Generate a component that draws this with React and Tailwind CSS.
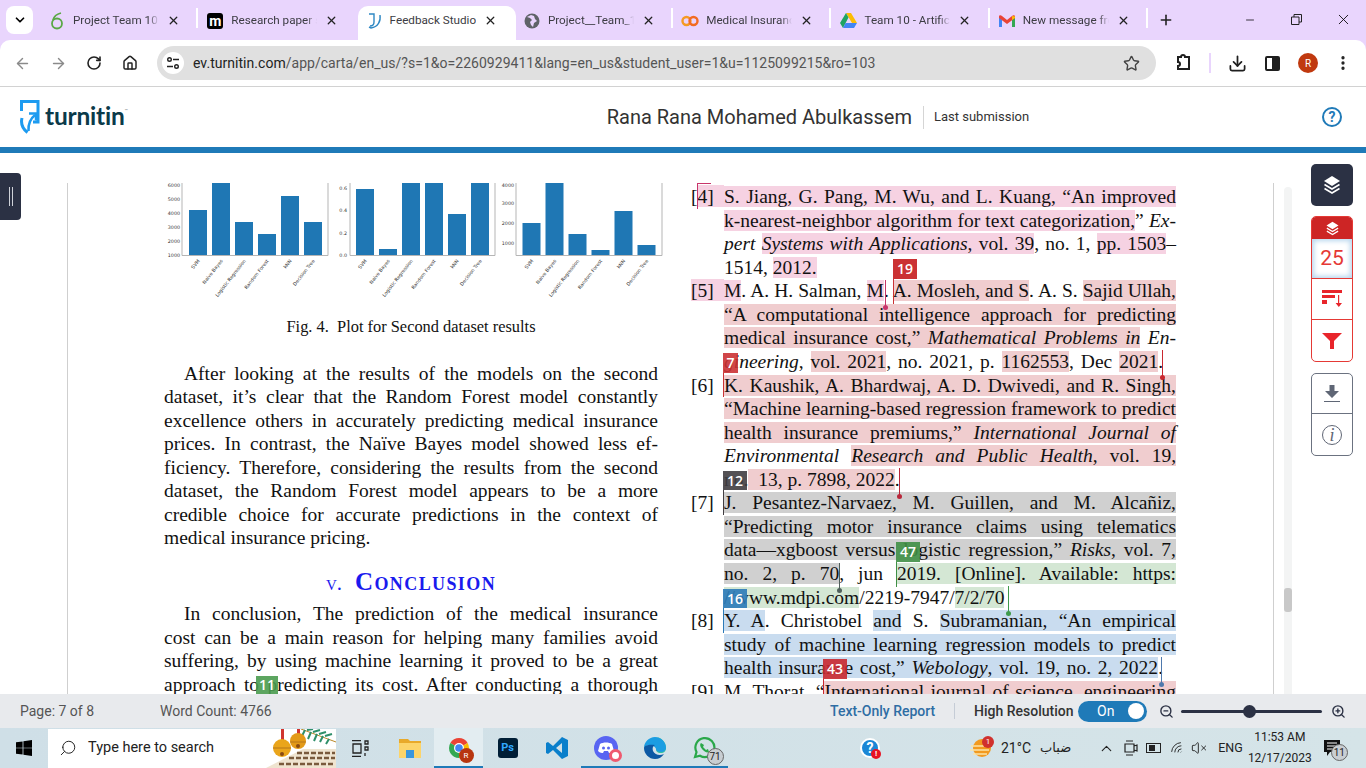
import {
  ArrowLeft, ArrowRight, RotateCw, Home, Star, Download, MoreVertical, X, Plus, Minus,
  ChevronDown, ChevronUp, Search, ZoomIn, ZoomOut, Wifi, VolumeX,
} from "lucide-react";

const SERIF = "[font-family:'Liberation_Serif',serif]";

const PINK = "bg-[#f6d2e2]";
const ROSE = "bg-[#f0cdcf]";
const GRAY = "bg-[#d0d0d0]";
const GREEN = "bg-[#d4e7d4]";
const BLUE = "bg-[#c9dcef]";

function OverleafIcon() {
  return (
    <svg width="14" height="18" viewBox="0 0 14 18" fill="none" stroke="#5aa845" strokeWidth="1.8">
      <circle cx="7" cy="11.5" r="5" />
      <path d="M11 1c-4 1-7 3-8 7" />
    </svg>
  );
}

function TurnitinFavicon() {
  return (
    <svg width="18" height="18" viewBox="0 0 18 18" fill="none" stroke="#2f88c4" strokeWidth="1.4">
      <path d="M4 2h5v8c0 3-2 4-4 4" />
      <path d="M15 3c1 6-2 12-9 13l-2-1" />
    </svg>
  );
}

function GlobeIcon() {
  return (
    <svg width="16" height="16" viewBox="0 0 16 16">
      <circle cx="8" cy="8" r="7.5" fill="#5f6368" />
      <path d="M3 4l3 1 2 2-2 2 1 3 2 2 1-4 3-2-2-2-1-3-3-1z" fill="#e9d5fd" />
    </svg>
  );
}

function RingsIcon() {
  return (
    <svg width="18" height="12" viewBox="0 0 18 12" fill="none" strokeWidth="2.4">
      <circle cx="5.5" cy="6" r="4" stroke="#f59a23" />
      <circle cx="12.5" cy="6" r="4" stroke="#f26b21" />
    </svg>
  );
}

function DriveIcon() {
  return (
    <svg width="17" height="15" viewBox="0 0 17 15">
      <path d="M6 0h5l6 10h-5z" fill="#fbbc04" />
      <path d="M6 0l2.5 4.5L3 15 0 10z" fill="#1fa463" />
      <path d="M5.5 10H17l-3 5H3z" fill="#4285f4" />
    </svg>
  );
}

function GmailIcon() {
  return (
    <svg width="16" height="12" viewBox="0 0 16 12">
      <path d="M0 1.5V12h3V5z" fill="#4285f4" />
      <path d="M16 1.5V12h-3V5z" fill="#34a853" />
      <path d="M0 1.5C0 0 2 0 3 1l5 4 5-4c1-1 3-1 3 .5V3L8 9 0 3z" fill="#ea4335" />
      <path d="M13 1l3 .5V3l-3 2z" fill="#fbbc04" />
    </svg>
  );
}

function Tab({ icon, title, active, sep }) {
  return (
    <div className="relative flex h-[34px] w-[158.3px] shrink-0 items-center self-end pb-[5px]">
      {active && (
        <div className="absolute inset-x-0 top-0 bottom-0 rounded-t-[10px] bg-white" />
      )}
      <div className="relative flex w-[30px] shrink-0 items-center justify-center pl-[2px]">{icon}</div>
      <div
        className={`relative w-[88px] overflow-hidden pl-[2px] text-[11.7px] whitespace-nowrap text-[#3c3c43] ${
          active ? "" : "[mask-image:linear-gradient(to_right,black_88%,transparent)]"
        }`}
      >
        {title}
      </div>
      <X className="relative ml-[8px] text-[#222]" size={13} strokeWidth={2.4} />
      {sep && <div className="absolute right-[1px] h-[20px] w-[2px] -translate-y-[3px] bg-white" />}
    </div>
  );
}

function TabBar() {
  return (
    <div className="flex h-[40px] shrink-0 bg-[#e9d5fd]">
      <div className="ml-[6px] mt-[6px] flex h-[28px] w-[27px] shrink-0 items-center justify-center rounded-[8px] bg-white">
        <ChevronDown size={14} strokeWidth={3} />
      </div>
      <div className="ml-[8px] flex">
        <Tab icon={<OverleafIcon />} title="Project Team 10" sep />
        <Tab
          icon={
            <div className="flex size-[16px] items-center justify-center rounded-[3px] bg-black text-[14px] leading-none font-bold text-white">
              m
            </div>
          }
          title="Research paper s"
        />
        <Tab icon={<TurnitinFavicon />} title="Feedback Studio" active />
        <Tab icon={<GlobeIcon />} title="Project__Team_10" sep />
        <Tab icon={<RingsIcon />} title="Medical Insurance" sep />
        <Tab icon={<DriveIcon />} title="Team 10 - Artificial" sep />
        <Tab icon={<GmailIcon />} title="New message from" sep />
      </div>
      <Plus className="ml-[9px] mt-[12px] text-[#222]" size={16} strokeWidth={2.4} />
      <div className="ml-auto flex pb-[1px]">
        <div className="flex w-[47px] items-center justify-center">
          <Minus size={12} strokeWidth={1.5} />
        </div>
        <div className="flex w-[47px] items-center justify-center">
          <svg width="11" height="11" viewBox="0 0 11 11" fill="none" stroke="#222">
            <path d="M.5 3h7.5v7.5H.5zM3 3V.5h7.5V8H8" />
          </svg>
        </div>
        <div className="flex w-[46px] items-center justify-center">
          <X size={17} strokeWidth={1.2} />
        </div>
      </div>
    </div>
  );
}

function PuzzleIcon() {
  return (
    <svg width="20" height="20" viewBox="0 0 20 20" fill="none" stroke="#1f1f1f" strokeWidth="2">
      <path d="M5 4h3a2 2 0 0 1 4 0h4v12H5v-3a2 2 0 0 0 0-4z" />
    </svg>
  );
}

function Toolbar() {
  return (
    <div className="h-[47px] shrink-0 bg-[#e9d5fd]">
      <div className="flex h-[47px] items-center rounded-t-[10px] border-b border-[#d2d2d2] bg-white">
        <ArrowLeft className="ml-[14px] text-[#8a8a8a]" size={17} />
        <ArrowRight className="ml-[19px] text-[#8a8a8a]" size={17} />
        <RotateCw className="ml-[19px] text-[#222]" size={16} strokeWidth={2.4} />
        <Home className="ml-[20px] text-[#222]" size={16} strokeWidth={2.2} />
        <div className="ml-[19px] flex h-[34px] w-[999px] items-center rounded-full bg-[#e0e0e0]">
          <div className="ml-[5px] flex size-[22px] items-center justify-center rounded-full bg-white">
            <svg width="14" height="14" viewBox="0 0 14 14" fill="none" stroke="#222" strokeWidth="1.4">
              <circle cx="3.5" cy="3.5" r="1.8" />
              <path d="M7 3.5h6M1 10.5h6" />
              <circle cx="10.5" cy="10.5" r="1.8" />
            </svg>
          </div>
          <div className="ml-[9px] pt-[1px] text-[14px] tracking-[0.03px] whitespace-nowrap text-[#555]">
            <span className="text-[#222]">ev.turnitin.com</span>
            /app/carta/en_us/?s=1&amp;o=2260929411&amp;lang=en_us&amp;student_user=1&amp;u=1125099215&amp;ro=103
          </div>
          <Star className="ml-auto mr-[16px] text-[#444]" size={17} strokeWidth={2} />
        </div>
        <div className="ml-[17px]">
          <PuzzleIcon />
        </div>
        <div className="ml-[16px] h-[20px] w-[2px] bg-[#e9d5fd]" />
        <Download className="ml-[17px] text-[#1f1f1f]" size={19} strokeWidth={2.2} />
        <div className="ml-[18px] flex h-[15px] w-[15px] rounded-[2px] border-2 border-[#1f1f1f]">
          <div className="ml-auto h-full w-[6px] bg-[#1f1f1f]" />
        </div>
        <div className="ml-[18px] flex size-[20px] items-center justify-center rounded-full bg-[#c0390f] text-[10px] text-white">
          R
        </div>
        <MoreVertical className="ml-[16px] text-[#222]" size={18} strokeWidth={2.4} />
      </div>
    </div>
  );
}

function AppHeader() {
  return (
    <header className="flex h-[66px] shrink-0 border-b-[6px] border-[#1f7ab8] bg-white text-[#333]">
      <div className="ml-[20px] flex items-center">
        <svg width="22" height="34" viewBox="0 0 22 34" fill="none" stroke="#1d9bf0" strokeWidth="3">
          <path d="M1.500 11V1.500H18V22H13" />
          <path d="M8.500 31C8 24 10 19 15 15" strokeWidth="2.500" />
          <path d="M9 13.500h7v7" strokeWidth="2.500" />
          <path d="M2 18c-1.500 6 1 11 5.500 14.500" />
        </svg>
        <div className="relative ml-[3px] mb-[1px] text-[24.5px] leading-none font-bold tracking-[-0.2px] text-[#0b3a4a] [font-family:Lato,sans-serif]">
          turnitin
          <span className="absolute -right-[3px] top-[5px] text-[4px] font-normal text-[#777]">™</span>
        </div>
      </div>
      <div className="ml-[482px] flex items-center">
        <div className="text-[20px] whitespace-nowrap">Rana Rana Mohamed Abulkassem</div>
        <div className="ml-[11px] h-[23px] w-px bg-[#d5d5d5]" />
        <div className="ml-[10px] text-[13px]">Last submission</div>
      </div>
      <div className="ml-auto mr-[24px] flex items-center">
        <div className="flex size-[20px] items-center justify-center rounded-full border-2 border-[#1f7ab8] text-[14px] font-bold text-[#1f7ab8]">
          ?
        </div>
      </div>
    </header>
  );
}

function Chart({ x, w, axisL, axisR, bars, ticks, tickX }) {
  const labels = ["SVM", "Naive Bayes", "Logistic Regression", "Random Forest", "kNN", "Decision Tree"];
  return (
    <svg width={w} height="132" viewBox={`${x} 183 ${w} 132`} className="shrink-0">
      {bars.map(([bx, bw, top], i) => (
        <g key={i}>
          <rect x={bx} y={top} width={bw} height={255.5 - top} fill="#1f77b4" />
          <text
            x={bx + bw / 2 + 2}
            y="261"
            fontSize="4.8"
            fill="#333"
            textAnchor="end"
            transform={`rotate(-52 ${bx + bw / 2 + 2} 261)`}
            fontFamily="'DejaVu Sans', sans-serif"
          >
            {labels[i]}
          </text>
        </g>
      ))}
      <path d={`M${axisL} 183V255.5H${axisR}V183`} fill="none" stroke="#b5b5b5" />
      {ticks.map(([label, y]) => (
        <text key={label} x={tickX} y={y + 1.7} fontSize="4.8" fill="#333" textAnchor="end" fontFamily="'DejaVu Sans', sans-serif">
          {label}
        </text>
      ))}
    </svg>
  );
}

function Charts() {
  return (
    <div className="flex h-[132px]">
      <Chart
        x={164}
        w={169}
        axisL={182}
        axisR={328}
        tickX={180}
        bars={[[189, 18, 210], [212, 18, 183], [235, 18, 222], [258, 18, 234], [281, 18, 196], [304, 18, 222]]}
        ticks={[["6000", 185], ["5000", 199.5], ["4000", 213.5], ["3000", 227.5], ["2000", 241.5], ["1000", 255]]}
      />
      <Chart
        x={333}
        w={165}
        axisL={350}
        axisR={495}
        tickX={347}
        bars={[[356, 18, 189], [379, 18, 249], [402, 18, 183], [425, 18, 183], [448, 18, 214], [471, 18, 183]]}
        ticks={[["0.6", 188], ["0.4", 210], ["0.2", 233], ["0.0", 255]]}
      />
      <Chart
        x={498}
        w={166}
        axisL={516}
        axisR={662}
        tickX={514}
        bars={[[522.5, 18, 223], [545.5, 18, 183], [568.5, 18, 234], [591.5, 18, 250], [614.5, 18, 211], [637.5, 18, 245]]}
        ticks={[["4000", 185], ["3000", 203], ["2000", 223], ["1000", 243]]}
      />
    </div>
  );
}

// one typeset line of the pdf, stretched to the column like LaTeX did it
function L({ children, end, fit = "" }) {
  return (
    <div className={end ? "whitespace-nowrap" : `text-justify whitespace-nowrap [text-align-last:justify] ${fit}`}>
      {children}
    </div>
  );
}

function LeftColumn() {
  return (
    <div className="w-[494px] shrink-0">
      <Charts />
      <div className="h-[24px] text-center text-[16.4px] leading-[24px]">Fig. 4.&nbsp;&nbsp;Plot for Second dataset results</div>
      <div className="mt-[22.5px]">
        <div className="pl-[20px]">
          <L>After looking at the results of the models on the second</L>
        </div>
        <L>dataset, it’s clear that the Random Forest model constantly</L>
        <L>excellence others in accurately predicting medical insurance</L>
        <L>prices. In contrast, the Naïve Bayes model showed less ef-</L>
        <L>ficiency. Therefore, considering the results from the second</L>
        <L>dataset, the Random Forest model appears to be a more</L>
        <L>credible choice for accurate predictions in the context of</L>
        <L end>medical insurance pricing.</L>
      </div>
      <div className="mt-[20px] flex h-[26px] items-baseline justify-center text-[#1a1aee] [font-variant:small-caps]">
        <span className="mr-[13px] text-[21px]">v.</span>
        <span className="text-[25px] font-bold tracking-[1.4px]">Conclusion</span>
      </div>
      <div className="mt-[6px]">
        <div className="pl-[20px]">
          <L>In conclusion, The prediction of the medical insurance</L>
        </div>
        <L>cost can be a main reason for helping many families avoid</L>
        <L>suffering, by using machine learning it proved to be a great</L>
        <L>approach to predicting its cost. After conducting a thorough</L>
      </div>
    </div>
  );
}

function RefRow({ num, numClass = "", children, end, fit }) {
  return (
    <div className="flex">
      <div className="w-[33px] shrink-0">
        <span className={`block h-[22px] ${numClass}`}>{num}</span>
      </div>
      <div className="w-[452px] shrink-0">
        <L end={end} fit={fit}>{children}</L>
      </div>
    </div>
  );
}

function RightColumn() {
  return (
    <div className="ml-[33px] w-[485px] shrink-0 pt-[2px]">
      <RefRow
        num={
          <span className="flex">
            <span>[</span>
            <span className={`h-[22px] flex-1 ${PINK}`}>4]</span>
          </span>
        }
      >
        <span className={PINK}>S. Jiang, G. Pang, M. Wu, and L. Kuang, “An improved</span>
      </RefRow>
      <RefRow>
        <span className={PINK}>k-nearest-neighbor algorithm for text categorization,</span>” <i>Ex-</i>
      </RefRow>
      <RefRow>
        <i>pert </i>
        <span className={PINK}>
          <i>Systems with Applications</i>, vol. 39
        </span>
        , no. 1, <span className={PINK}>pp. 1503</span>–
      </RefRow>
      <RefRow end>
        1514, <span className={PINK}>2012.</span>
      </RefRow>
      <RefRow num="[5]" numClass={PINK}>
        <span className={PINK}>M</span>. A. H. Salman, <span className={PINK}>M</span>. <span className={ROSE}>A. Mosleh, and S</span>. A. S.{" "}
        <span className={ROSE}>Sajid Ullah,</span>
      </RefRow>
      <RefRow>
        <span className={ROSE}>“A computational intelligence approach for predicting</span>
      </RefRow>
      <RefRow>
        <span className={ROSE}>
          medical insurance cost,” <i>Mathematical Problems in</i>
        </span>{" "}
        <i>En-</i>
      </RefRow>
      <RefRow fit="w-[439px]">
        <i>gineering</i>, <span className={ROSE}>vol. 2021</span>, no. 2021, p. <span className={ROSE}>1162553</span>, Dec{" "}
        <span className={ROSE}>2021</span>.
      </RefRow>
      <RefRow num="[6]">
        <span className={ROSE}>K. Kaushik, A. Bhardwaj, A. D. Dwivedi, and R. Singh,</span>
      </RefRow>
      <RefRow>
        <span className={ROSE}>“Machine learning-based regression framework to predict</span>
      </RefRow>
      <RefRow>
        <span className={ROSE}>
          health insurance premiums,” <i>International Journal of</i>
        </span>
      </RefRow>
      <RefRow>
        <i>Environmental </i>
        <span className={ROSE}>
          <i>Research and Public Health</i>, vol. 19,
        </span>
      </RefRow>
      <RefRow end>
        no.<span className={ROSE}>&nbsp;&nbsp;13, p. 7898, 2022</span>.
      </RefRow>
      <RefRow num="[7]">
        <span className={GRAY}>J. Pesantez-Narvaez, M. Guillen, and M. Alcañiz,</span>
      </RefRow>
      <RefRow>
        <span className={GRAY}>“Predicting motor insurance claims using telematics</span>
      </RefRow>
      <RefRow>
        <span className={GRAY}>
          data—xgboost versus logistic regression,” <i>Risks</i>, vol. 7,
        </span>
      </RefRow>
      <RefRow>
        <span className={GRAY}>no. 2, p. 70</span>, jun <span className={GREEN}>2019. [Online]. Available: https:</span>
      </RefRow>
      <RefRow end>
        <span className={GREEN}>//www.mdpi.com</span>/2219-7947/<span className={GREEN}>7/2/70</span>
      </RefRow>
      <RefRow num="[8]">
        <span className={BLUE}>Y. A</span>. Christobel <span className={BLUE}>and</span> S. <span className={BLUE}>Subramanian, “An empirical</span>
      </RefRow>
      <RefRow>
        <span className={BLUE}>study of machine learning regression models to predict</span>
      </RefRow>
      <RefRow fit="w-[439px]">
        <span className={BLUE}>
          health insurance cost,” <i>Webology</i>, vol. 19, no. 2, 2022
        </span>
        .
      </RefRow>
      <RefRow num="[9]">
        M. Thorat, “<span className={ROSE}>International journal of science, engineering</span>
      </RefRow>
    </div>
  );
}

function Badge({ pos, color, stem, stemH, children }) {
  return (
    <div className={`absolute flex items-center justify-center overflow-visible text-[14px] leading-none font-semibold text-white [font-family:'Open_Sans',sans-serif] ${pos} ${color}`}>
      {children}
      {stem && <div className={`absolute left-0 top-full w-px ${stem} ${stemH}`} />}
    </div>
  );
}

function Pin({ pos, color }) {
  return (
    <div className={`absolute w-px ${pos} ${color}`}>
      <span className={`absolute -bottom-[2px] -left-[2px] size-[5px] rounded-full ${color}`} />
    </div>
  );
}

function Annotations() {
  return (
    <>
      <div className="absolute left-[629px] top-0 h-[26px] w-[14px] border-l border-t border-[#c8356a]" />
      <Pin pos="left-[817px] top-[97px] h-[28px]" color="bg-[#c8356a]" />
      <Pin pos="left-[1094px] top-[167px] h-[28px]" color="bg-[#c9282f]" />
      <Pin pos="left-[831px] top-[285px] h-[29px]" color="bg-[#b9273a]" />
      <Pin pos="left-[771px] top-[380px] h-[28px]" color="bg-[#4f5f5b]" />
      <Pin pos="left-[940px] top-[403px] h-[28px]" color="bg-[#3f9a4b]" />
      <Pin pos="left-[1093px] top-[474px] h-[28px]" color="bg-[#4e79ad]" />
      <Badge pos="left-[825px] top-[76px] h-[20px] w-[24px]" color="bg-[#cb3234]" stem="bg-[#cb3234]" stemH="h-[25px]">19</Badge>
      <Badge pos="left-[655px] top-[170px] h-[20px] w-[15px]" color="bg-[#cb3234]/90" stem="bg-[#cb3234]" stemH="h-[24px]">7</Badge>
      <Badge pos="left-[655px] top-[288px] h-[19px] w-[24px]" color="bg-[#413e42]/90" stem="bg-[#413e42]" stemH="h-[25px]">12</Badge>
      <Badge pos="left-[828px] top-[359px] h-[20px] w-[24px]" color="bg-[#3f8f45]/90" stem="bg-[#3f8f45]" stemH="h-[25px]">47</Badge>
      <Badge pos="left-[655px] top-[406px] h-[19px] w-[24px]" color="bg-[#2b7ab8]/90" stem="bg-[#2b7ab8]" stemH="h-[25px]">16</Badge>
      <Badge pos="left-[755px] top-[476px] h-[20px] w-[24px]" color="bg-[#c9282f]/90" stem="bg-[#c9282f]" stemH="h-[15px]">43</Badge>
      <Badge pos="left-[188px] top-[493px] h-[18px] w-[22px]" color="bg-[#4a9b4f]/90">11</Badge>
    </>
  );
}

function LayersIcon({ size = 20 }) {
  return (
    <svg width={size} height={size} viewBox="0 0 20 20" fill="none" stroke="white" strokeWidth="1.6">
      <path d="M10 1l8 5-8 5-8-5z" fill="white" stroke="none" />
      <path d="M2.5 9.5L10 14l7.5-4.5M2.5 13.5L10 18l7.5-4.5" />
    </svg>
  );
}

function Rail() {
  return (
    <div className="ml-[19px] w-[42px] shrink-0 pt-[11px]">
      <div className="flex h-[42px] items-center justify-center rounded-[5px] bg-[#2b3144]">
        <LayersIcon size={20} />
      </div>
      <div className="mt-[10px] overflow-hidden rounded-[5px] border border-[#e53935] bg-white">
        <div className="flex h-[22px] items-center justify-center bg-[#cd2525]">
          <LayersIcon size={15} />
        </div>
        <div className="flex h-[40px] items-center justify-center border-b border-[#e53935] text-[21px] text-[#e53935] shadow-[inset_0_0_5px_2px_#b9d7ee]">
          25
        </div>
        <div className="flex h-[41px] items-center justify-center border-b border-[#e53935]">
          <svg width="20" height="18" viewBox="0 0 20 18" fill="#e8252b">
            <rect x="0" y="0" width="20" height="3" />
            <rect x="0" y="5" width="13" height="3" />
            <rect x="0" y="10" width="5" height="4" />
            <path d="M16 5h1.2v8H20l-3.2 4-3.2-4H16z" />
          </svg>
        </div>
        <div className="flex h-[41px] items-center justify-center">
          <svg width="20" height="16" viewBox="0 0 20 16" fill="#e8252b">
            <path d="M0 0h20l-8 8v8H8V8z" />
          </svg>
        </div>
      </div>
      <div className="mt-[11px] overflow-hidden rounded-[5px] border border-[#6b7280] bg-white">
        <div className="flex h-[40px] items-center justify-center border-b border-[#6b7280]">
          <svg width="16" height="18" viewBox="0 0 16 18" fill="#5f6675">
            <path d="M5.5 0h5v6H15l-7 7-7-7h4.500z" />
            <rect x="0" y="16" width="16" height="1" />
          </svg>
        </div>
        <div className="flex h-[41px] items-center justify-center">
          <div className={`flex size-[20px] items-center justify-center rounded-full border border-[#5f6675] text-[18px] leading-none text-[#5f6675] italic ${SERIF}`}>
            i
          </div>
        </div>
      </div>
    </div>
  );
}

function Workspace() {
  return (
    <main className="flex min-h-0 flex-1 overflow-hidden bg-white">
      <div className="w-[67px] shrink-0 pt-[20px]">
        <div className="flex h-[47px] w-[21px] items-center justify-center rounded-r-[4px] bg-[#2b3144]">
          <div className="h-[19px] w-[4px] border-x border-[#cfd2d9]" />
        </div>
      </div>
      <div className={`relative mt-[30px] flex h-[511px] w-[1207px] shrink-0 overflow-hidden border-x border-[#cfcfcf] pl-[96px] text-[19.5px] leading-[23.57px] text-[#111] ${SERIF}`}>
        <LeftColumn />
        <RightColumn />
        <Annotations />
      </div>
      <div className="ml-[10px] mt-[34px] w-[8px] shrink-0 rounded-t-[4px] bg-[#f3f4f4]">
        <div className="mt-[401px] h-[24px] rounded-[3px] bg-[#c8c8c8]" />
      </div>
      <Rail />
    </main>
  );
}

function StatusBar() {
  return (
    <footer className="flex h-[34px] shrink-0 items-center bg-[#e8eaed] text-[14px] text-[#555]">
      <div className="ml-[20px] w-[140px]">Page: 7 of 8</div>
      <div className="w-[112px] whitespace-nowrap">Word Count: 4766</div>
      <div className="ml-[558px] w-[106px] font-medium whitespace-nowrap text-[#2e6da4]">Text-Only Report</div>
      <div className="ml-[18px] h-[16px] w-px bg-[#c5ccd6]" />
      <div className="ml-[19px] w-[99px] font-medium whitespace-nowrap text-[#333]">High Resolution</div>
      <div className="ml-[5px] flex h-[21px] w-[69px] items-center justify-between rounded-full bg-[#1f7ab8] pl-[19px] pr-[3px] text-white">
        On
        <span className="size-[16px] rounded-full bg-white" />
      </div>
      <ZoomOut className="ml-[12px] text-[#2b3144]" size={15} strokeWidth={2.2} />
      <div className="relative ml-[7px] h-[3px] w-[141px] rounded bg-[#2b3144]">
        <span className="absolute left-[62px] -top-[5px] size-[13px] rounded-full bg-[#2b3144]" />
      </div>
      <ZoomIn className="ml-[9px] text-[#2b3144]" size={15} strokeWidth={2.2} />
    </footer>
  );
}

function SearchDecor() {
  return (
    <svg width="75" height="39" viewBox="0 0 75 39" className="absolute right-0 top-0">
      <path d="M5 39L42 20H75V39z" fill="#efe4d0" />
      <path d="M18 35h55M28 29h46M36 24h38" stroke="#7a5a3c" strokeWidth="2.5" strokeDasharray="5 2" />
      <path d="M40 0L75 13" stroke="#b8892a" strokeWidth="1" />
      <path d="M44 1l-3 6M50 3l-3 7M56 5l-3 7M62 7l-3 6M68 10l-3 5M46 1l6-1M52 3l7-2M58 5l7-2M64 7l7-2" stroke="#2f8f6a" strokeWidth="2" fill="none" />
      <rect x="20" y="0" width="3" height="11" fill="#d0342f" />
      <rect x="36" y="0" width="3" height="6" fill="#d0342f" />
      <circle cx="21" cy="19" r="9" fill="#eaa51b" />
      <circle cx="37" cy="12" r="8" fill="#e39a18" />
      <path d="M12 19h18M29 13h16" stroke="#b5761a" />
      <circle cx="21" cy="25" r="2" fill="#8a4a12" />
      <circle cx="37" cy="17" r="2" fill="#8a4a12" />
    </svg>
  );
}

function ChromeIcon() {
  return (
    <div className="relative size-[24px]">
      <svg width="24" height="24" viewBox="0 0 24 24">
        <path d="M12 12L3.340 7A10 10 0 0 1 20.660 7Z" fill="#ea4335" />
        <path d="M12 12L20.660 7A10 10 0 0 1 12 22Z" fill="#fbbc04" />
        <path d="M12 12L12 22A10 10 0 0 1 3.340 7Z" fill="#34a853" />
        <circle cx="12" cy="12" r="5" fill="white" />
        <circle cx="12" cy="12" r="3.800" fill="#4285f4" />
      </svg>
      <div className="absolute -right-[3px] -bottom-[3px] flex size-[15px] items-center justify-center rounded-full bg-[#b8360f] text-[8px] text-white">
        R
      </div>
    </div>
  );
}

function CountBubble({ children }) {
  return (
    <span className="absolute -right-[8px] -bottom-[5px] flex size-[17px] items-center justify-center rounded-full border border-[#666] bg-[#c9ced2] text-[10px] text-[#222]">
      {children}
    </span>
  );
}

function Slot({ children, on, lit }) {
  return (
    <div className={`flex h-[40px] w-[49px] shrink-0 items-center justify-center ${lit ? "bg-[#e3edf1]" : ""} ${on ? "border-b-2 border-[#1f7ab8] pt-[2px]" : ""}`}>
      {children}
    </div>
  );
}

function Taskbar() {
  return (
    <div className="flex h-[40px] shrink-0 items-center bg-[linear-gradient(to_right,#cfdfe7,#d5e4e8)] text-[#222]">
      <div className="flex w-[48px] shrink-0 justify-center">
        <svg width="16" height="16" viewBox="0 0 16 16" fill="black">
          <path d="M0 2.300l6.600-.9v6.300H0zM7.400 1.300L16 0v7.700H7.400zM0 8.300h6.600v6.300L0 13.700zM7.400 8.300H16V16l-8.600-1.200z" />
        </svg>
      </div>
      <div className="relative flex h-[39px] w-[288px] shrink-0 items-center bg-white">
        <Search className="ml-[11px] -scale-x-100" size={18} strokeWidth={1.3} />
        <span className="ml-[11px] text-[14.5px]">Type here to search</span>
        <SearchDecor />
      </div>
      <Slot>
        <svg width="17" height="17" viewBox="0 0 17 17" fill="none" stroke="#222" strokeWidth="1.3">
          <path d="M0 .7h9M0 16.300h9M1 4h8v9H1zM13 1v3h3V1zM13 7v3h3V7zM13 13v3" />
        </svg>
      </Slot>
      <Slot>
        <svg width="22" height="20" viewBox="0 0 22 20">
          <path d="M0 1h9l2 2h11v3H0z" fill="#e8a92a" />
          <path d="M0 5h22v15H0z" fill="#fcd46a" />
          <path d="M7 12h8v8H7z" fill="#3a96dd" />
        </svg>
      </Slot>
      <Slot on lit>
        <ChromeIcon />
      </Slot>
      <Slot>
        <div className="flex size-[20px] items-center justify-center rounded-[3px] bg-[#001e36] text-[11px] font-bold text-[#31a8ff]">
          Ps
        </div>
      </Slot>
      <Slot>
        <svg width="24" height="24" viewBox="0 0 24 24">
          <path d="M17 1l6 3v16l-6 3-9-9-5 4-2-1V7l2-1 5 4zM17 7l-6 5 6 5z" fill="#0a7fcb" />
        </svg>
      </Slot>
      <Slot on>
        <div className="relative size-[24px] rounded-full bg-[#5865f2]">
          <svg width="24" height="24" viewBox="0 0 24 24" fill="white">
            <path d="M6 8c3-2 9-2 12 0l2 7c-2 2-4 2-5 2l-1-2h-4l-1 2c-1 0-3 0-5-2z" />
            <circle cx="9.500" cy="12" r="1.500" fill="#5865f2" />
            <circle cx="14.500" cy="12" r="1.500" fill="#5865f2" />
          </svg>
          <span className="absolute -right-[4px] -bottom-[2px] size-[13px] rounded-full border-[3px] border-[#ef5a6f] bg-white" />
        </div>
      </Slot>
      <Slot on>
        <svg width="24" height="24" viewBox="0 0 24 24">
          <path d="M12 1a11 11 0 0 1 11 11c0 3-2 5-5 5-4 0-5-2-5-4 0-3-4-5-7-4C7 5 9 4 12 4c3 0 5 2 6 4 1-4-3-7-6-7z" fill="#35c1a1" />
          <path d="M1 12C1 6 6 1 12 1c6 0 11 5 11 11 0 2-2 4-5 4-3 0-5-1-5-3 0-4-12-6-12 0z" fill="#1b9de2" />
          <path d="M1 12c0 6 5 11 11 11 4 0 7-2 9-5-4 2-9 1-11-3-1-3 0-5 2-6-5-1-11 0-11 3z" fill="#0c59a4" />
        </svg>
      </Slot>
      <Slot on>
        <div className="relative">
          <svg width="24" height="24" viewBox="0 0 24 24" fill="none" stroke="#2aa84a" strokeWidth="2.200">
            <path d="M3 21l1.500-5A9.500 9.500 0 1 1 8 19.700z" />
            <path d="M9 7c-2 2 0 5 2 7s4 3 6 2l-1-3-2 1-3-3 1-2z" fill="#2aa84a" stroke="none" />
          </svg>
          <CountBubble>71</CountBubble>
        </div>
      </Slot>
      <div className="relative ml-[132px] flex size-[20px] shrink-0 items-center justify-center rounded-full border-2 border-white bg-[#1b87d6] text-[14px] font-bold text-white">
        ?
        <span className="absolute -right-[3px] -bottom-[3px] flex size-[10px] items-center justify-center rounded-full bg-[#e81123] text-[8px] leading-none">
          !
        </span>
      </div>
      <div className="relative ml-[90px] shrink-0">
        <svg width="22" height="22" viewBox="0 0 22 22">
          <circle cx="12" cy="11" r="9" fill="#f29a1f" />
          <path d="M1 9h18M0 13h19M3 17h14" stroke="#fbe3a8" strokeWidth="1.600" />
        </svg>
        <span className="absolute -right-[2px] -top-[1px] flex size-[12px] items-center justify-center rounded-full bg-[#d0312d] text-[8px] text-white">
          1
        </span>
      </div>
      <div className="ml-[9px] text-[14px] whitespace-nowrap">21°C</div>
      <div className="ml-[9px] text-[13px] whitespace-nowrap [font-family:'DejaVu_Sans',sans-serif]">ضباب</div>
      <ChevronUp className="ml-[27px]" size={17} strokeWidth={1.6} />
      <svg className="ml-[8px]" width="16" height="18" viewBox="0 0 16 18" fill="none" stroke="#222" strokeWidth="1.200">
        <path d="M3 2h7M3 16h7M2 5h9v8H2zM11 7l3-1v6l-3-1" />
      </svg>
      <div className="ml-[7px] flex h-[10px] w-[15px] items-center border border-[#222] pl-[2px]">
        <div className="h-[6px] w-[6px] bg-[#222]" />
      </div>
      <Wifi className="ml-[9px] -rotate-45" size={15} strokeWidth={1.4} />
      <VolumeX className="ml-[6px]" size={16} strokeWidth={1.4} />
      <div className="ml-[11px] text-[12.5px]">ENG</div>
      <div className="ml-[6px] flex w-[62px] shrink-0 flex-col items-center text-[12px] leading-[21px] whitespace-nowrap">
        <span>11:53 AM</span>
        <span>12/17/2023</span>
      </div>
      <div className="relative ml-[13px]">
        <svg width="16" height="16" viewBox="0 0 16 16">
          <path d="M0 0h16v12H6l-3 4v-4H0z" fill="#111" />
          <path d="M3 3h10M3 6h10M3 9h7" stroke="white" />
        </svg>
        <CountBubble>11</CountBubble>
      </div>
    </div>
  );
}

export default function App() {
  return (
    <div className="flex h-[768px] w-[1366px] flex-col overflow-hidden bg-white [font-family:Roboto,sans-serif]">
      <TabBar />
      <Toolbar />
      <AppHeader />
      <Workspace />
      <StatusBar />
      <Taskbar />
    </div>
  );
}
